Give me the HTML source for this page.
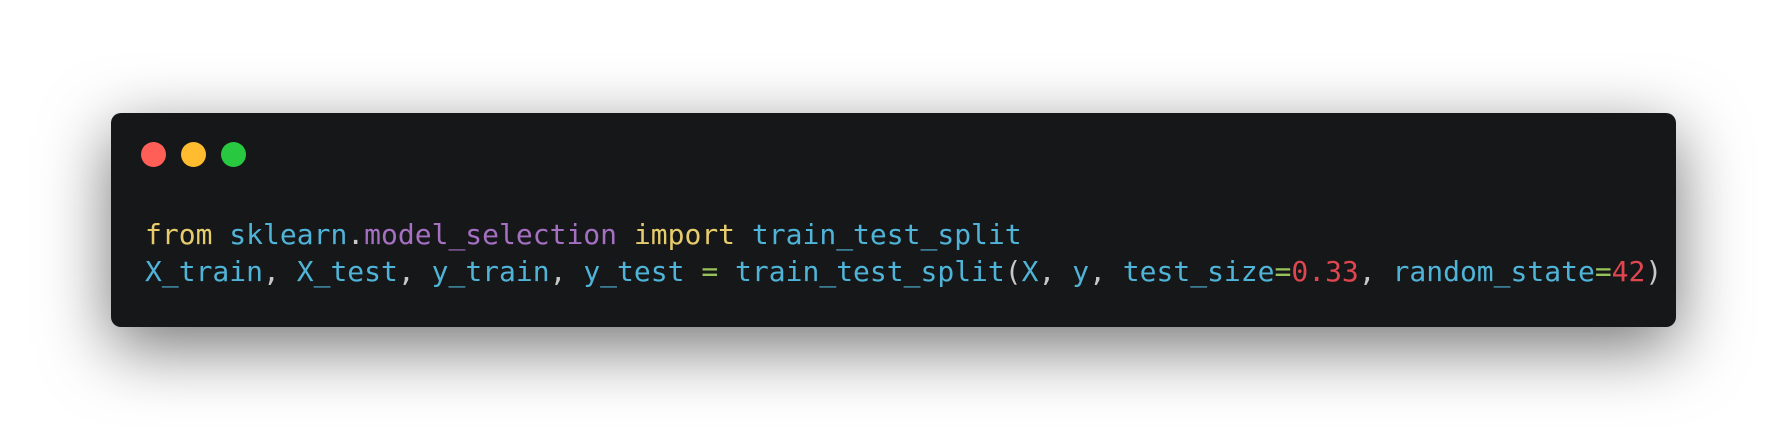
<!DOCTYPE html>
<html><head><style>
html,body{margin:0;padding:0;width:1788px;height:438px;background:#fff;overflow:hidden}
.card{position:absolute;left:111px;top:113px;width:1565px;height:214px;background:#161719;border-radius:10px;box-shadow:0 20px 68px rgba(0,0,0,0.55)}
.dot{position:absolute;top:142px;width:25px;height:25px;border-radius:50%}
pre{position:absolute;left:145px;top:216px;margin:0;font-family:"DejaVu Sans Mono","Liberation Mono",monospace;font-size:28px;line-height:37px;color:#4fb4d7;letter-spacing:0px}
.k{color:#e6cc6c}.p{color:#a56fc2}.w{color:#c8c8c8}.o{color:#98c25a}.n{color:#e0464f}
</style></head><body>
<div class="card"></div>
<div class="dot" style="left:141px;background:#ff5f57"></div>
<div class="dot" style="left:181px;background:#febc2e"></div>
<div class="dot" style="left:221px;background:#28c840"></div>
<pre><span class="k">from</span> sklearn<span class="w">.</span><span class="p">model_selection</span> <span class="k">import</span> train_test_split
X_train<span class="w">,</span> X_test<span class="w">,</span> y_train<span class="w">,</span> y_test <span class="o">=</span> train_test_split<span class="w">(</span>X<span class="w">,</span> y<span class="w">,</span> test_size<span class="o">=</span><span class="n">0.33</span><span class="w">,</span> random_state<span class="o">=</span><span class="n">42</span><span class="w">)</span></pre>
</body></html>
